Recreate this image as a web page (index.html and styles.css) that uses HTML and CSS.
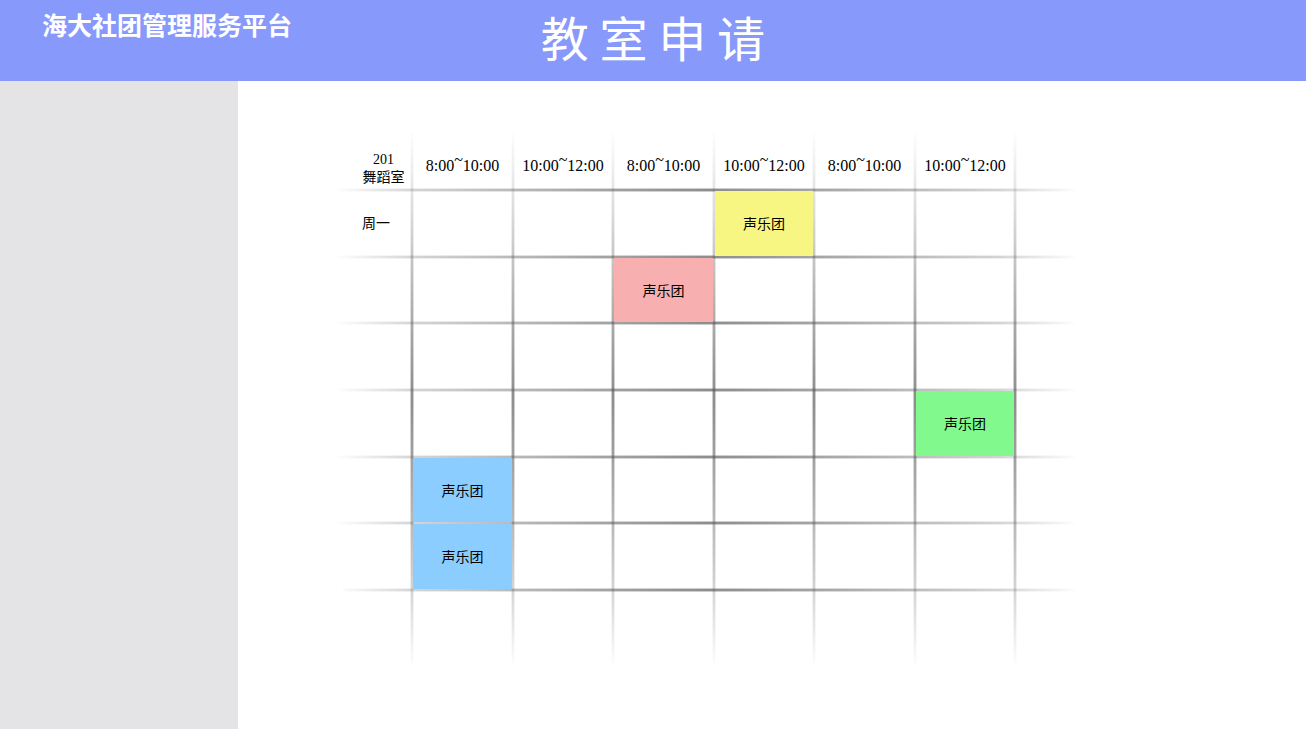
FILE: index.html
```html
<!DOCTYPE html>
<html lang="zh-CN">
<head>
<meta charset="utf-8">
<meta name="viewport" content="width=device-width, initial-scale=1">
<title>教室申请</title>
<link rel="stylesheet" href="styles.css">
</head>
<body>
<header class="topbar">
  <p class="brand">海大社团管理服务平台</p>
  <h1 class="title">教 室 申 请</h1>
</header>
<div class="layout">
  <aside class="sidebar"></aside>
  <main class="content">
    <div class="schedule">
      <svg class="lines" viewBox="0 0 748 538" preserveAspectRatio="none" aria-hidden="true">
        <defs>
          <linearGradient id="fade-x" gradientUnits="userSpaceOnUse" x1="0" y1="0" x2="744" y2="0">
            <stop offset="0" stop-color="#555" stop-opacity="0"/>
            <stop offset="0.11" stop-color="#555" stop-opacity="0.25"/>
            <stop offset="0.5" stop-color="#555" stop-opacity="0.75"/>
            <stop offset="0.89" stop-color="#555" stop-opacity="0.25"/>
            <stop offset="1" stop-color="#555" stop-opacity="0"/>
          </linearGradient>
          <linearGradient id="fade-y" gradientUnits="userSpaceOnUse" x1="0" y1="0" x2="0" y2="538">
            <stop offset="0" stop-color="#555" stop-opacity="0"/>
            <stop offset="0.15" stop-color="#555" stop-opacity="0.2"/>
            <stop offset="0.5" stop-color="#555" stop-opacity="0.75"/>
            <stop offset="0.85" stop-color="#555" stop-opacity="0.25"/>
            <stop offset="1" stop-color="#555" stop-opacity="0"/>
          </linearGradient>
          <path id="rows" d="M0 60H740M0 127H740M0 193H740M0 260H740M0 327H740M0 393H740M8 460H748"/>
          <path id="cols" d="M77 0V538M178 0V538M278 0V538M379 0V538M479 0V538M580 0V538M680 0V538"/>
        </defs>
        <g stroke="url(#fade-x)"><use href="#rows" class="halo"/><use href="#rows" class="core"/></g>
        <g stroke="url(#fade-y)"><use href="#cols" class="halo"/><use href="#cols" class="core"/></g>
      </svg>
      <table class="grid">
        <colgroup>
          <col class="c-label"><col class="c-wide"><col class="c-slot"><col class="c-wide"><col class="c-slot"><col class="c-wide"><col class="c-slot"><col class="c-tail">
        </colgroup>
        <thead>
          <tr class="head">
            <th class="room" scope="col">201<br>舞蹈室</th>
            <th scope="col">8:00<span class="to">~</span>10:00</th>
            <th scope="col">10:00<span class="to">~</span>12:00</th>
            <th scope="col">8:00<span class="to">~</span>10:00</th>
            <th scope="col">10:00<span class="to">~</span>12:00</th>
            <th scope="col">8:00<span class="to">~</span>10:00</th>
            <th scope="col">10:00<span class="to">~</span>12:00</th>
            <td></td>
          </tr>
        </thead>
        <tbody>
          <tr class="tall"><th scope="row">周一</th><td></td><td></td><td></td><td class="yellow">声乐团</td><td></td><td></td><td></td></tr>
          <tr class="short"><th></th><td></td><td></td><td class="pink">声乐团</td><td></td><td></td><td></td><td></td></tr>
          <tr class="tall"><th></th><td></td><td></td><td></td><td></td><td></td><td></td><td></td></tr>
          <tr class="tall"><th></th><td></td><td></td><td></td><td></td><td></td><td class="green">声乐团</td><td></td></tr>
          <tr class="short"><th></th><td class="blue">声乐团</td><td></td><td></td><td></td><td></td><td></td><td></td></tr>
          <tr class="tall"><th></th><td class="blue">声乐团</td><td></td><td></td><td></td><td></td><td></td><td></td></tr>
        </tbody>
      </table>
    </div>
  </main>
</div>
</body>
</html>
```
FILE: styles.css
```css
* {
  box-sizing: border-box;
}

body {
  margin: 0;
  min-height: 100vh;
  display: flex;
  flex-direction: column;
  background: #fff;
  color: #000;
  font-family: "Liberation Serif", "Noto Sans CJK SC", serif;
}

.topbar {
  display: grid;
  grid-template-columns: 1fr auto 1fr;
  align-items: start;
  padding: 4px 42px 13px;
  background: #8799fb;
  color: #fff;
}

.brand {
  margin: 0;
  font: 700 25px/40px "Noto Sans CJK SC", sans-serif;
  white-space: nowrap;
}

.title {
  margin: 0;
  font: 400 48px/64px "KaiTi", "STKaiti", "Noto Sans CJK SC", serif;
  white-space: nowrap;
}

.layout {
  flex: 1;
  display: flex;
}

.sidebar {
  flex: 0 0 238px;
  background: #e4e4e6;
}

.content {
  flex: 1;
  padding: 49px 223px 48px 97px;
}

.schedule {
  position: relative;
  padding: 0 8px 78px 0;
}

.lines {
  position: absolute;
  inset: 0;
  width: 100%;
  height: 100%;
}

.halo,
.core {
  fill: none;
}

.halo {
  stroke-width: 4px;
  opacity: 0.4;
}

.core {
  stroke-width: 2px;
  opacity: 0.7;
}

.grid {
  position: relative;
  width: 100%;
  table-layout: fixed;
  border-collapse: separate;
  border-spacing: 0;
  font-size: 14px;
  line-height: 18px;
}

.c-label { width: 77px; }
.c-wide { width: 101px; }
.c-slot { width: 100px; }
.c-tail { width: 60px; }

.head { height: 60px; }
.tall { height: 67px; }
.short { height: 66px; }

.grid th,
.grid td {
  padding: 0;
  border: 1px solid transparent;
  background-clip: padding-box;
  font-weight: 400;
  text-align: center;
  white-space: nowrap;
}

.head th {
  padding-top: 12px;
  font-size: 16px;
}

.to {
  vertical-align: 6px;
  line-height: 1px;
}

.head .room {
  padding: 0 6px 2px 26px;
  font-size: 14px;
  vertical-align: bottom;
}

.grid tbody th {
  padding-left: 26px;
  text-align: left;
}

.grid tbody td {
  padding-top: 3px;
}

.yellow { background-color: #f8f682; }
.pink { background-color: #f7afb0; }
.green { background-color: #82f98c; }
.blue { background-color: #8ccdff; }
```
